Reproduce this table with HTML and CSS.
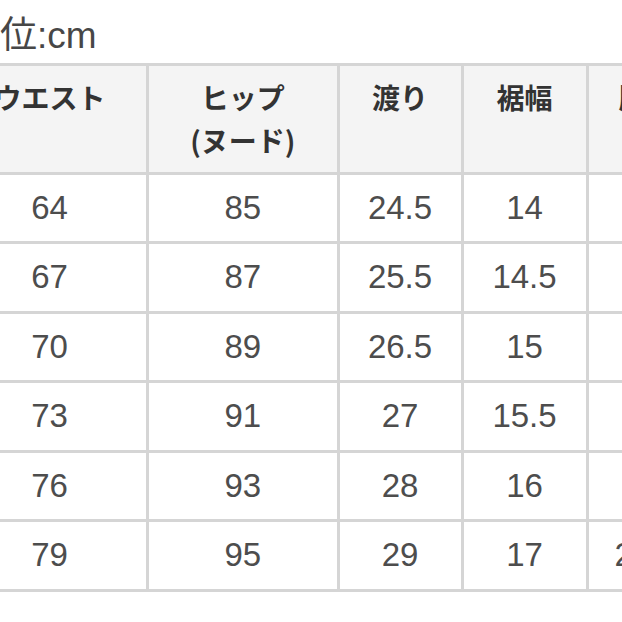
FILE: index.html
```html
<!DOCTYPE html>
<html lang="ja">
<head>
<meta charset="utf-8">
<link rel="stylesheet" href="styles.css">
</head>
<body>
<div class="chart">
  <div class="unit">単位:cm</div>
  <div class="sheet">
    <div class="cell head">ウエスト</div>
    <div class="cell head">ヒップ<br>(ヌード)</div>
    <div class="cell head">渡り</div>
    <div class="cell head">裾幅</div>
    <div class="cell head">股上</div>

    <div class="cell">64</div><div class="cell">85</div><div class="cell">24.5</div><div class="cell">14</div><div class="cell">20</div>
    <div class="cell">67</div><div class="cell">87</div><div class="cell">25.5</div><div class="cell">14.5</div><div class="cell">20</div>
    <div class="cell">70</div><div class="cell">89</div><div class="cell">26.5</div><div class="cell">15</div><div class="cell">21</div>
    <div class="cell">73</div><div class="cell">91</div><div class="cell">27</div><div class="cell">15.5</div><div class="cell">21</div>
    <div class="cell">76</div><div class="cell">93</div><div class="cell">28</div><div class="cell">16</div><div class="cell">22</div>
    <div class="cell">79</div><div class="cell">95</div><div class="cell">29</div><div class="cell">17</div><div class="cell">22.5</div>
  </div>
</div>
</body>
</html>
```
FILE: styles.css
```css
html, body {
  margin: 0;
  padding: 0;
  background: #ffffff;
  overflow: hidden;
}

body {
  width: 622px;
  height: 622px;
  font-family: "Liberation Sans", "Noto Sans CJK JP", sans-serif;
  color: #444444;
}

.chart {
  margin-left: -50px;
}

.unit {
  padding: 16px 0 0 13px;
  height: 40px;
  line-height: 40px;
  font-size: 37px;
  color: #474747;
  margin-bottom: 7px;
  white-space: nowrap;
}

.sheet {
  display: grid;
  grid-template-columns: 193px 187.5px 121px 122px 116px;
  grid-template-rows: 105.5px repeat(6, 66.5px);
  gap: 3px;
  padding: 3px;
  background: #d5d5d5;
  width: max-content;
}

.cell {
  background: #ffffff;
  display: flex;
  align-items: center;
  justify-content: center;
  font-size: 33px;
  color: #4d4d4d;
  white-space: nowrap;
}

.cell.head {
  background: #f4f4f4;
  align-items: flex-start;
  text-align: center;
  padding-top: 10px;
  box-sizing: border-box;
  font-family: "Noto Sans CJK JP", sans-serif;
  font-weight: bold;
  font-size: 28px;
  line-height: 43px;
  color: #333333;
}
```
